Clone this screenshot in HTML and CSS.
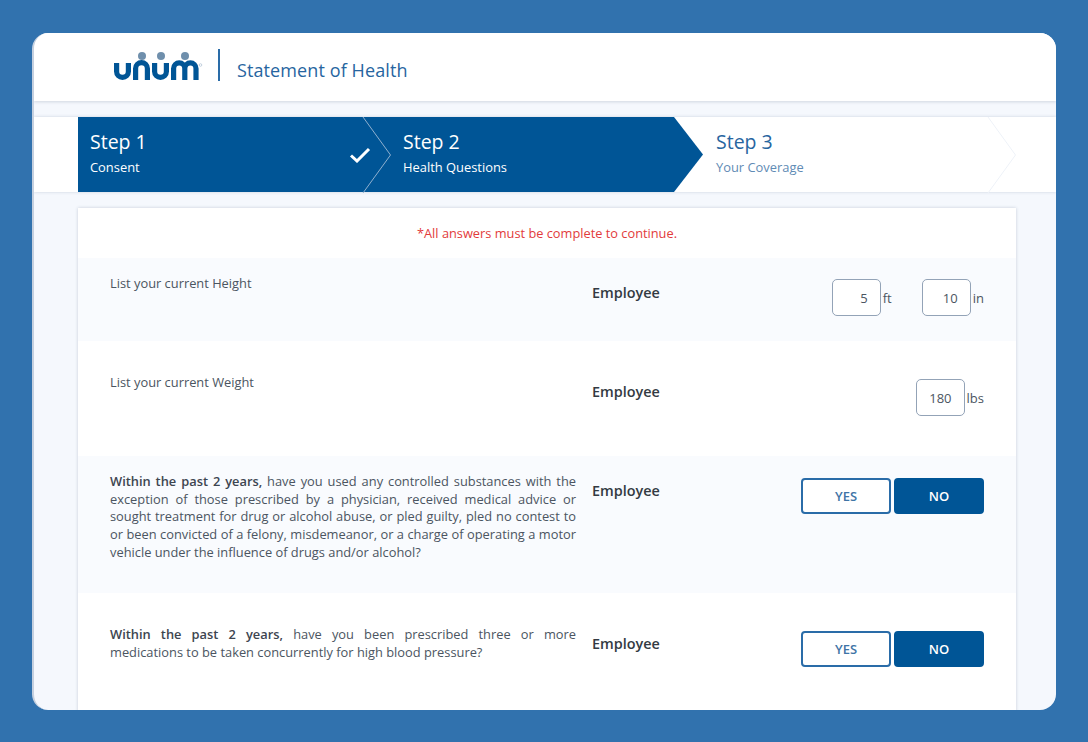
FILE: index.html
```html
<!DOCTYPE html>
<html lang="en">
<head>
  <meta charset="UTF-8" />
  <meta name="viewport" content="width=device-width, initial-scale=1.0"/>
  <title>Statement of Health</title>
  <link rel="stylesheet" href="styles.css">
</head>
<body>
  <div class="card">

    <!-- Header -->
    <div class="header">
      <svg class="logo" width="90" height="32" viewBox="0 0 90 32" aria-label="Unum">
        <g fill="#6f8fac">
          <circle cx="29" cy="6" r="4"/>
          <circle cx="48" cy="6" r="4"/>
          <circle cx="72" cy="6" r="4"/>
        </g>
        <g fill="none" stroke="#005596" stroke-width="5.2">
          <path d="M3.6 13V21.5A5.9 5.9 0 0 0 15.4 21.5V13"/>
          <path d="M22.6 30V18.5A5.9 5.9 0 0 1 34.4 18.5V30"/>
          <path d="M41.6 13V21.5A5.9 5.9 0 0 0 53.4 21.5V13"/>
          <path d="M60.6 30V18.5A5.6 5.6 0 0 1 71.8 18.5V30M71.8 18.5A5.6 5.6 0 0 1 83 18.5V30"/>
        </g>
        <circle cx="87.5" cy="15" r="1.3" fill="none" stroke="#8fa9c2" stroke-width=".5"/>
      </svg>
      <div class="header-rule"></div>
      <div class="header-title">Statement of Health</div>
    </div>

    <!-- Steps -->
    <div class="steps">
      <div class="step step-done">
        <div class="step-name">Step 1</div>
        <div class="step-sub">Consent</div>
        <svg class="step-check" width="22" height="16" viewBox="0 0 22 16">
          <path d="M2 8.5L8 14L20 2" fill="none" stroke="#fff" stroke-width="3"/>
        </svg>
        <svg class="step-arrow" width="30" height="76" viewBox="0 0 30 76">
          <path d="M1 0L28.5 38L1 76" fill="none" stroke="#8fb0cf" stroke-width="1"/>
        </svg>
      </div>
      <div class="step step-current">
        <div class="step-name">Step 2</div>
        <div class="step-sub">Health Questions</div>
      </div>
      <div class="step step-next">
        <div class="step-name">Step 3</div>
        <div class="step-sub">Your Coverage</div>
        <svg class="step-arrow" width="30" height="76" viewBox="0 0 30 76">
          <path d="M1 0L28.5 38L1 76" fill="none" stroke="#eef2f8" stroke-width="1"/>
        </svg>
      </div>
    </div>

    <!-- Questions -->
    <div class="main">
      <div class="panel">
        <div class="note">*All answers must be complete to continue.</div>

        <div class="row row-tint row-height">
          <div class="question">List your current Height</div>
          <div class="who">Employee</div>
          <div class="answer">
            <input class="num" type="text" value="5"><span class="unit">ft</span>
            <input class="num num-next" type="text" value="10"><span class="unit">in</span>
          </div>
        </div>

        <div class="row row-loose row-weight">
          <div class="question">List your current Weight</div>
          <div class="who">Employee</div>
          <div class="answer">
            <input class="num" type="text" value="180"><span class="unit">lbs</span>
          </div>
        </div>

        <div class="row row-tint row-long">
          <div class="question"><b>Within the past 2 years,</b> have you used any controlled substances with the exception of those prescribed by a physician, received medical advice or sought treatment for drug or alcohol abuse, or pled guilty, pled no contest to or been convicted of a felony, misdemeanor, or a charge of operating a motor vehicle under the influence of drugs and/or alcohol?</div>
          <div class="who">Employee</div>
          <div class="answer answer-btns">
            <button class="btn" type="button">YES</button>
            <button class="btn btn-on" type="button">NO</button>
          </div>
        </div>

        <div class="row row-loose row-last">
          <div class="question"><b>Within the past 2 years,</b> have you been prescribed three or more medications to be taken concurrently for high blood pressure?</div>
          <div class="who">Employee</div>
          <div class="answer answer-btns">
            <button class="btn" type="button">YES</button>
            <button class="btn btn-on" type="button">NO</button>
          </div>
        </div>
      </div>
    </div>

  </div>
</body>
</html>
```

FILE: styles.css
```css
* {
  box-sizing: border-box;
}
html, body {
  height: 100%;
}
body {
  margin: 0;
  padding: 33px 32px 32px;
  background: #3172ae;
  font-family: "Open Sans", Arial, sans-serif;
  color: #4b5561;
  overflow: hidden;
}
.card {
  height: 677px;
  background: #f5f8fd;
  border-radius: 16px;
  border-left: 2px solid #c5d0df;
  overflow: hidden;
}
.header {
  height: 68px;
  background: #fff;
  box-shadow: 0 1px 3px rgba(60, 80, 110, 0.2);
  display: flex;
  align-items: center;
  padding-left: 79px;
}
.logo {
  margin-top: -3px;
}
.header-rule {
  width: 2px;
  height: 32px;
  margin: -5px 0 0 15px;
  background: #2a6ca8;
}
.header-title {
  margin: 6px 0 0 17px;
  font-size: 18px;
  letter-spacing: 0.1px;
  color: #27659f;
  white-space: nowrap;
}
.steps {
  margin-top: 16px;
  height: 75px;
  background: #fff;
  box-shadow: 0 0 3px rgba(60, 80, 110, 0.22);
  display: flex;
  padding-left: 44px;
}
.step {
  position: relative;
  flex: 0 0 313px;
  padding: 11px 0 0 12px;
  color: #fff;
}
.step-name {
  font-size: 19.5px;
  line-height: 27px;
}
.step-sub {
  font-size: 12.9px;
  line-height: 18px;
  margin-top: 3px;
}
.step-done {
  background: #005596;
}
.step-current {
  background: #005596;
  clip-path: polygon(0 0, 283px 0, 312px 50%, 283px 100%, 0 100%);
}
.step-next .step-name {
  color: #27659f;
}
.step-next .step-sub {
  color: #5f8bb5;
}
.step-check {
  position: absolute;
  right: 20px;
  top: 30px;
}
.step-arrow {
  position: absolute;
  right: -1px;
  top: 0;
}
.step-next .step-arrow {
  right: 0;
}
.main {
  padding: 16px 40px 0 44px;
}
.panel {
  background: #fff;
  box-shadow: 0 0 3px rgba(60, 80, 110, 0.25);
  height: 600px;
}
.note {
  height: 50px;
  padding-top: 16px;
  text-align: center;
  font-size: 12.8px;
  line-height: 18px;
  color: #e23b3b;
}
.row {
  display: grid;
  grid-template-columns: 466px 1fr auto;
  column-gap: 16px;
  padding: 16px 32px 0;
}
.row-tint {
  background: #f9fbfe;
}
.row-loose {
  padding-top: 32px;
}
.row-height {
  height: 83px;
}
.row-weight {
  height: 115px;
}
.row-long {
  height: 137px;
}
.row-last {
  height: 120px;
}
.question {
  margin-top: 1px;
  font-size: 12.85px;
  line-height: 17.7px;
  text-align: justify;
}
.question b {
  font-weight: 600;
  color: #3d4550;
}
.who {
  margin-top: 9px;
  font-size: 14.4px;
  line-height: 19px;
  font-weight: 600;
  color: #333a42;
}
.answer {
  display: flex;
  align-items: center;
  align-self: start;
  margin-top: 5px;
}
.row-loose .answer {
  margin-top: 6px;
}
.row-long .answer-btns {
  margin-top: 6px;
}
.num {
  width: 49px;
  height: 37px;
  padding: 0 12px 0 0;
  border: 1.5px solid #93a3b7;
  border-radius: 5px;
  background: #fff;
  text-align: right;
  font-family: inherit;
  font-size: 13px;
  color: #4b5561;
}
.num-next {
  margin-left: 30px;
}
.unit {
  margin-left: 2px;
  font-size: 13px;
}
.btn {
  width: 90px;
  height: 36px;
  margin-left: 3px;
  padding: 0;
  border: 2px solid #2a6ca8;
  border-radius: 4px;
  background: #fff;
  font-family: inherit;
  font-size: 13px;
  font-weight: 600;
  color: #3f74a6;
}
.btn-on {
  background: #005596;
  border-color: #005596;
  color: #fff;
}
```
